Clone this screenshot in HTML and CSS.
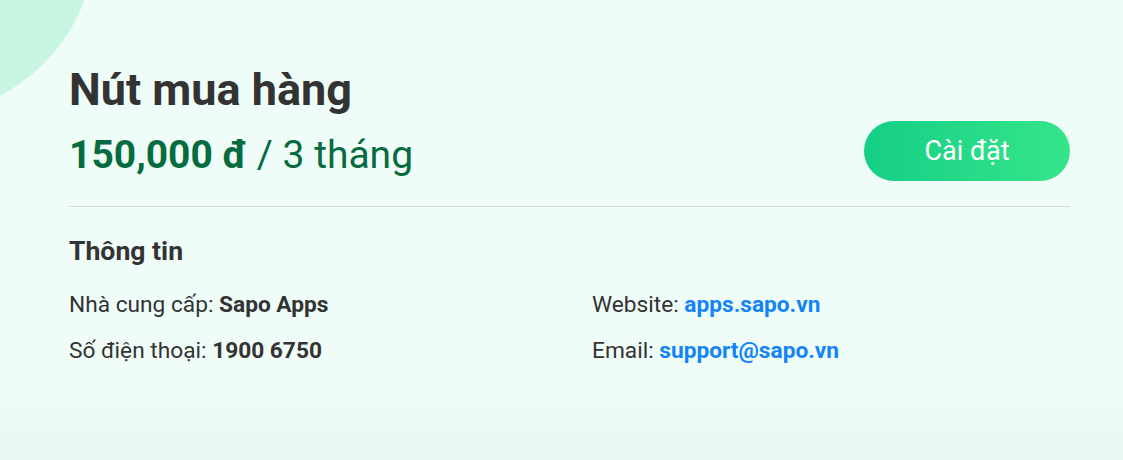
FILE: index.html
```html
<!DOCTYPE html>
<html lang="vi">
<head>
<meta charset="utf-8">
<title>Nút mua hàng</title>
<link rel="stylesheet" href="styles.css">
</head>
<body>
<div class="page">
  <div class="blob"></div>
  <main class="content">
    <header class="head">
      <div class="head-text">
        <h1 class="title">Nút mua hàng</h1>
        <p class="price"><strong>150,000 đ</strong> / 3 tháng</p>
      </div>
      <button class="install">Cài đặt</button>
    </header>
    <section class="info">
      <h2 class="info-title">Thông tin</h2>
      <div class="info-grid">
        <p class="row">Nhà cung cấp: <strong>Sapo Apps</strong></p>
        <p class="row">Website: <a class="link" href="#">apps.sapo.vn</a></p>
        <p class="row">Số điện thoại: <strong>1900 6750</strong></p>
        <p class="row">Email: <a class="link" href="#">support@sapo.vn</a></p>
      </div>
    </section>
  </main>
</div>
</body>
</html>
```
FILE: styles.css
```css
html, body {
  margin: 0;
  padding: 0;
}
body {
  font-family: Roboto, "Liberation Sans", sans-serif;
  color: #333;
}
.page {
  position: relative;
  width: 1123px;
  height: 460px;
  overflow: hidden;
  background: linear-gradient(180deg, #effdf8 0%, #effcf7 85%, #e6f8ef 100%);
}
.blob {
  position: absolute;
  left: -255px;
  top: -235px;
  width: 350px;
  height: 350px;
  border-radius: 50%;
  background: #c9f5e3;
}
.content {
  position: relative;
  padding: 63px 53px 0 69px;
}
.head {
  display: flex;
  align-items: flex-end;
  justify-content: space-between;
  padding-bottom: 25px;
  border-bottom: 1px solid #d9d9d9;
}
.title {
  margin: 0;
  font-size: 45px;
  line-height: 54px;
  font-weight: 700;
  color: #333;
}
.price {
  margin: 12px 0 0;
  font-size: 39px;
  line-height: 52px;
  color: #066b3e;
}
.price strong {
  font-weight: 700;
}
.install {
  width: 206px;
  height: 60px;
  padding: 0;
  border: 0;
  border-radius: 30px;
  background: linear-gradient(90deg, #14cf85 0%, #36e58a 100%);
  color: #fff;
  font-family: Roboto, "Liberation Sans", sans-serif;
  font-size: 27px;
}
.info {
  padding-top: 28px;
}
.info-title {
  margin: 0;
  font-size: 26.6px;
  line-height: 32px;
  font-weight: 700;
  color: #333;
}
.info-grid {
  display: grid;
  grid-template-columns: 523px 1fr;
  row-gap: 18px;
  margin-top: 24px;
}
.row {
  margin: 0;
  font-size: 22.7px;
  line-height: 28px;
  color: #333;
}
.row strong {
  font-weight: 700;
}
.link {
  color: #1384f5;
  font-weight: 700;
  text-decoration: none;
}
```
